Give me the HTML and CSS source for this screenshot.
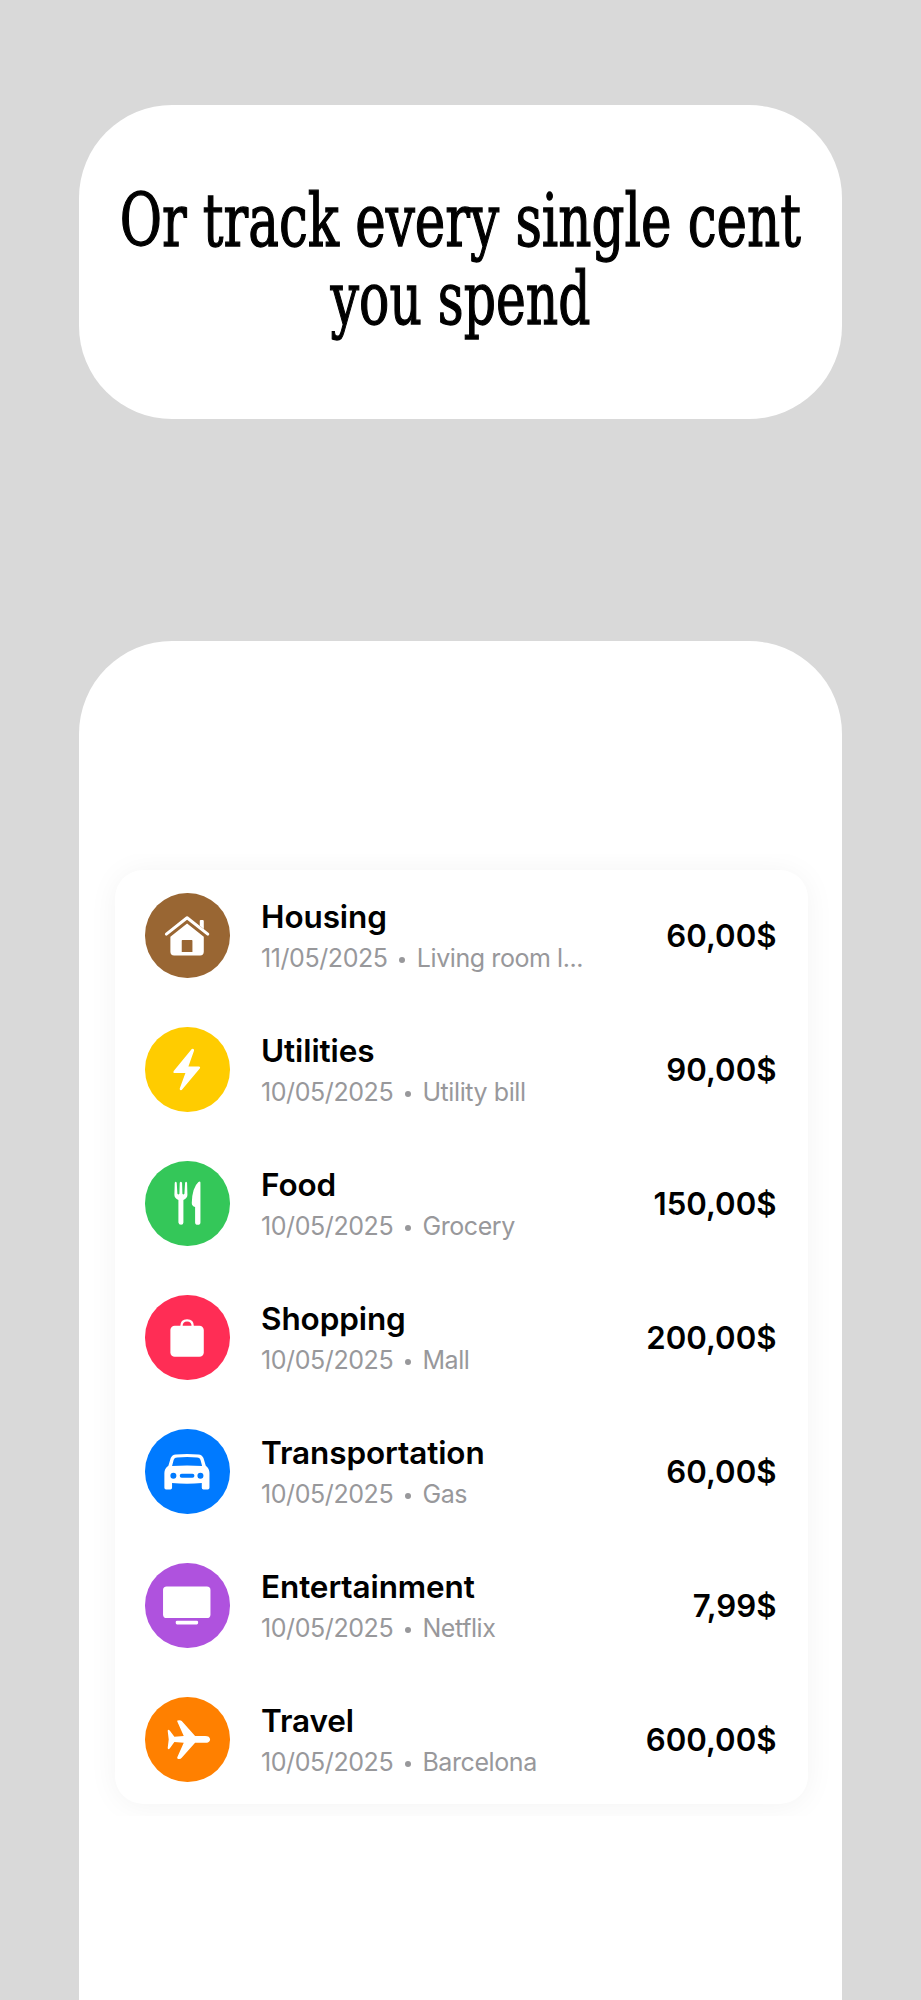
FILE: index.html
```html
<!DOCTYPE html>
<html lang="en">
<head>
    <meta charset="UTF-8">
    <meta name="viewport" content="width=device-width, initial-scale=1.0">
    <title>Expense Tracker</title>
    <link rel="stylesheet" href="styles.css">
</head>
<body>
    <div class="banner">
        <h1>
            <span class="line line-one">Or track every single cent</span>
            <span class="line line-two">you spend</span>
        </h1>
    </div>
    <div class="screen">
        <div class="list-wrap">
            <div class="list">
                <div class="row">
                    <svg class="icon housing" viewBox="0 0 253 253">
                        <path d="M64 123L126 74L188 123" fill="none" stroke="#fff" stroke-width="9" stroke-linecap="round" stroke-linejoin="round"/>
                        <path d="M164 98V84q0-3 3-3h6q3 0 3 3v24z" fill="#fff"/>
                        <path fill-rule="evenodd" d="M126 91L176 131V176q0 11-11 11H87q-11 0-11-11V131zM110 143v34h32v-34q0-2-2-2h-28q-2 0-2 2z" fill="#fff"/>
                    </svg>
                    <div class="info">
                        <div class="name">Housing</div>
                        <div class="detail">11/05/2025 <i class="dot"></i> Living room l...</div>
                    </div>
                    <div class="amount">60,00$</div>
                </div>
                <div class="row">
                    <svg class="icon utilities" viewBox="0 0 253 253">
                        <path d="M140 66L86 132q-3 6 3 6H121L104 184q-1 7 6 5L164 124q3-6-3-6H130L147 70q0-7-7-4z" fill="#fff"/>
                    </svg>
                    <div class="info">
                        <div class="name">Utilities</div>
                        <div class="detail">10/05/2025 <i class="dot"></i> Utility bill</div>
                    </div>
                    <div class="amount">90,00$</div>
                </div>
                <div class="row">
                    <svg class="icon food" viewBox="0 0 253 253">
                        <path d="M89 65q3-5 6 0L97 98q3 4 6 0L104 65q3-5 7 0L112 98q3 4 6 0L120 65q3-5 6 0L127 102q0 9-12 15V184q0 7-7 7t-8-7V117q-12-6-12-15z" fill="#fff"/>
                        <path d="M166 64V184q0 7-8 7t-8-7V138q-10-3-10-12Q141 80 160 63q5-4 6 1z" fill="#fff"/>
                    </svg>
                    <div class="info">
                        <div class="name">Food</div>
                        <div class="detail">10/05/2025 <i class="dot"></i> Grocery</div>
                    </div>
                    <div class="amount">150,00$</div>
                </div>
                <div class="row">
                    <svg class="icon shopping" viewBox="0 0 253 253">
                        <path d="M109 94Q109 76 126 76T143 94" fill="none" stroke="#fff" stroke-width="7"/>
                        <rect x="76" y="92" width="100" height="93" rx="13" fill="#fff"/>
                    </svg>
                    <div class="info">
                        <div class="name">Shopping</div>
                        <div class="detail">10/05/2025 <i class="dot"></i> Mall</div>
                    </div>
                    <div class="amount">200,00$</div>
                </div>
                <div class="row">
                    <svg class="icon transportation" viewBox="0 0 253 253">
                        <path fill-rule="evenodd" d="M92 76Q126 73 160 76Q171 77 175 87L182 110Q193 119 193 132V176q0 5-5 5H175q-5 0-5-5V162Q126 166 81 162V176q0 5-5 5H63q-5 0-5-5V132Q58 119 70 110L77 87Q81 77 92 76zM96 85Q88 85 86 92L81 111Q126 107 171 111L166 92Q164 85 156 85Q126 83 96 85zM76 140a9 9 0 1 0 18 0a9 9 0 1 0-18 0zM157 140a9 9 0 1 0 18 0a9 9 0 1 0-18 0zM110 134a6 6 0 0 0 0 12H142a6 6 0 0 0 0-12z" fill="#fff"/>
                    </svg>
                    <div class="info">
                        <div class="name">Transportation</div>
                        <div class="detail">10/05/2025 <i class="dot"></i> Gas</div>
                    </div>
                    <div class="amount">60,00$</div>
                </div>
                <div class="row">
                    <svg class="icon entertainment" viewBox="0 0 253 253">
                        <rect x="54" y="70" width="142" height="95" rx="11" fill="#fff"/>
                        <rect x="92" y="173" width="67" height="11" rx="4" fill="#fff"/>
                    </svg>
                    <div class="info">
                        <div class="name">Entertainment</div>
                        <div class="detail">10/05/2025 <i class="dot"></i> Netflix</div>
                    </div>
                    <div class="amount">7,99$</div>
                </div>
                <div class="row">
                    <svg class="icon travel" viewBox="0 0 253 253">
                        <path d="M195 127Q194 137 180 137H150L110 182Q106 187 98 185Q95 184 97 180L116 137L88 135L74 154Q68 159 68 152L71 127L68 102Q68 95 74 100L88 119L116 117L97 74Q95 70 98 70Q106 68 110 72L150 117H180Q194 117 195 127z" fill="#fff"/>
                    </svg>
                    <div class="info">
                        <div class="name">Travel</div>
                        <div class="detail">10/05/2025 <i class="dot"></i> Barcelona</div>
                    </div>
                    <div class="amount">600,00$</div>
                </div>
            </div>
        </div>
    </div>
</body>
</html>
```
FILE: styles.css
```css
* {
    box-sizing: border-box;
}
body {
    margin: 0;
    height: 2000px;
    padding: 104.5px 79px 0;
    background: #d9d9d9;
    font-family: Inter, sans-serif;
    color: #000;
    overflow: hidden;
}
.banner {
    height: 314px;
    padding-top: 77px;
    background: #fff;
    border-radius: 93px;
}
h1 {
    margin: 0;
    font-family: "DejaVu Serif Condensed", "DejaVu Serif", serif;
    font-stretch: condensed;
    font-size: 73.5px;
    font-weight: 400;
    line-height: 78.5px;
    display: flex;
    flex-direction: column;
    align-items: center;
    -webkit-text-stroke: 1.3px #000;
}
.line {
    white-space: nowrap;
}
.line-one {
    transform: scaleX(0.779);
}
.line-two {
    transform: scaleX(0.762);
}
.screen {
    height: 1360px;
    margin-top: 222px;
    padding-top: 213px;
    background: #fff;
    border-radius: 93px 93px 0 0;
}
/* keeps the card shadow inside the strip */
.list-wrap {
    padding: 16.5px 34.5px 12px 36px;
    overflow: hidden;
}
.list {
    height: 934px;
    padding: 23px 31px 22.5px 30px;
    display: flex;
    flex-direction: column;
    justify-content: space-between;
    background: #fff;
    border-radius: 28px;
    box-shadow: 0 2px 30px rgba(0, 0, 0, 0.05);
}
.row {
    display: flex;
    align-items: center;
    height: 84.5px;
}
.icon {
    width: 84.5px;
    height: 84.5px;
    border-radius: 50%;
    flex: none;
}
.info {
    flex: 1;
    margin-left: 31.5px;
    padding-top: 5px;
}
.name {
    font-size: 31.5px;
    font-weight: 600;
    line-height: 42px;
    letter-spacing: -0.1px;
}
.detail {
    display: flex;
    align-items: center;
    font-size: 25px;
    line-height: 41px;
    letter-spacing: -0.42px;
    color: #98989b;
    white-space: pre;
}
.dot {
    width: 6px;
    height: 6px;
    margin: 3px 5px 0;
    border-radius: 50%;
    background: #98989b;
}
.amount {
    padding-top: 1px;
    font-size: 31.2px;
    font-weight: 600;
}
.housing { background: #996633; }
.utilities { background: #ffcc00; }
.food { background: #34c759; }
.shopping { background: #ff2d55; }
.transportation { background: #007aff; }
.entertainment { background: #af52de; }
.travel { background: #ff8000; }
```
